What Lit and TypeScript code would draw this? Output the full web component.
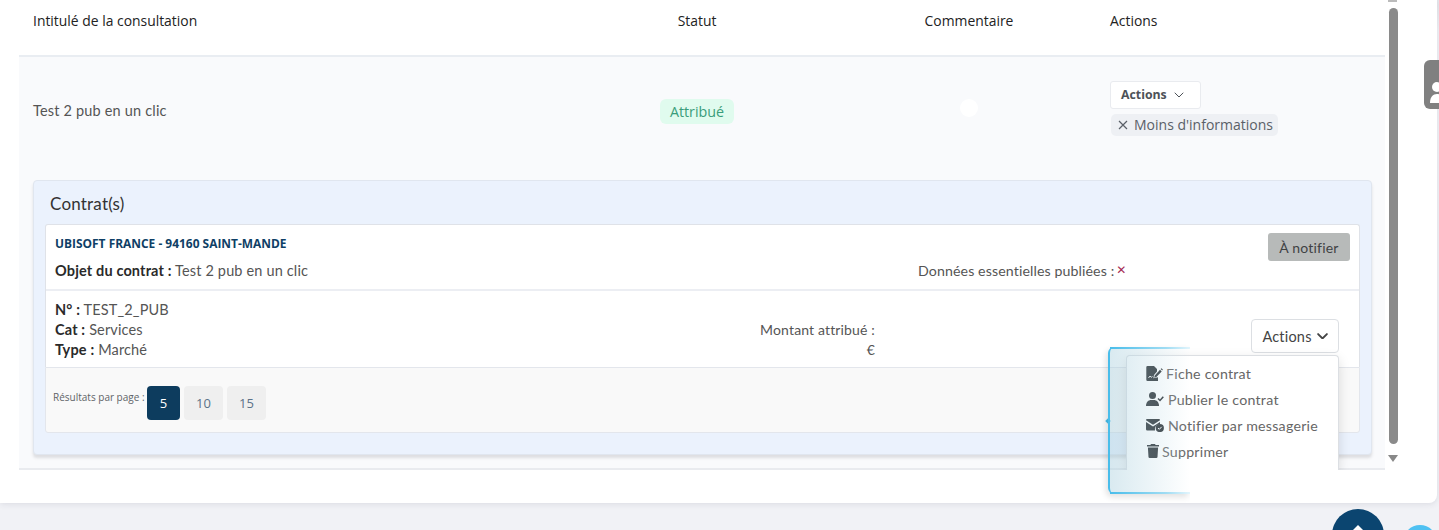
import { LitElement, html, css } from "lit";
import { customElement } from "lit/decorators.js";

const chevron = (w: number, sw: number) => html`<svg class="chev" width=${w} height=${w * 0.6} viewBox="0 0 10 6" fill="none" stroke="currentColor" stroke-width=${sw} stroke-linecap="round" stroke-linejoin="round"><path d="M1 1l4 4 4-4"/></svg>`;

const fileIcon = html`<svg class="ic file" width="17" height="15" viewBox="0 0 17 15" fill="#1f2428"><path d="M1.500 0H8l3 3v2.600L8 9l-.6 3.200 4.600-1V15H1.500A1.200 1.200 0 0 1 .3 13.800V1.200A1.200 1.200 0 0 1 1.500 0z"/><path d="M8.800 9.400l5.200-5.600 1.700 1.600-5.300 5.600-2.300.7z"/><path d="M14.700 3.100l.8-.8 1.300 1.200-.6 1z"/><path d="M2.500 12l1.500-2 1.200 1.300 1.300-.8" fill="none" stroke="#fff" stroke-width=".9"/></svg>`;
const userIcon = html`<svg class="ic user" width="18" height="14" viewBox="0 0 18 14" fill="#1f2428"><circle cx="6.500" cy="3.500" r="3.500"/><path d="M0 14c0-4 2.500-6 5-6h3c2.500 0 5 2 5 6z"/><path d="M12 6.500l2 2 3.300-3.800" fill="none" stroke="#1f2428" stroke-width="1.500"/></svg>`;
const mailIcon = html`<svg class="ic user" width="18" height="13" viewBox="0 0 18 13" fill="#1f2428"><path d="M1.300 0h11.400c.8 0 1.300.5 1.300 1.200L7 5.800 0 1.200C0 .5.500 0 1.300 0z"/><path d="M0 2.900l7 4.500 7-4.500v2.300a5 5 0 0 0-5 6.300H1.300A1.300 1.300 0 0 1 0 10.200z"/><circle cx="13.800" cy="9" r="4.100"/><path d="M12 9l1.300 1.300 2.400-2.500" fill="none" stroke="#fff" stroke-width="1"/></svg>`;
const trashIcon = html`<svg class="ic trash" width="12" height="14" viewBox="0 0 12 14" fill="#1f2428"><path d="M4 0h4l.6 1H12v1.500H0V1h3.400z"/><path d="M.9 3.500h10.200l-.6 9.400a1.200 1.200 0 0 1-1.200 1.100H2.700a1.200 1.200 0 0 1-1.200-1.100z"/></svg>`;

@customElement("app-root")
export class AppRoot extends LitElement {
  static styles = css`
    :host { display: block; position: relative; height: 530px; overflow: hidden; background: linear-gradient(#e5e6eb, #f1f2f6 30px); font-family: "Lato", "Open Sans", sans-serif; color: #555; }
    .card { width: 1437px; height: 503px; background: #fff; border-radius: 0 0 8px 0; box-shadow: 0 1px 6px rgba(60,60,80,.12); display: flex; padding-left: 19px; box-sizing: border-box; }
    .table { width: 1366px; flex: none; }
    .grid { display: grid; grid-template-columns: 537px 282px 262px 285px; }
    .thead { height: 57px; box-sizing: border-box; align-items: center; border-bottom: 2px solid #e9edf2; font-family: "Open Sans", sans-serif; font-size: 13.900px; color: #222; padding-bottom: 14px; }
    .thead .c1 { padding-left: 14px; } .thead .c2, .thead .c3 { text-align: center; } .thead .c4 { padding-left: 10px; }
    .expanded { background: #f9fafc; height: 411px; border-bottom: 2px solid #e9ebef; }
    .main { height: 108px; align-items: center; }
    .name { padding-left: 14px; font-size: 14.500px; letter-spacing: .18px; color: #555; margin-top: -2px; }
    .status { display: flex; justify-content: center; }
    .badge { font-family: "Open Sans", sans-serif; font-size: 14.300px; color: #3a9d7b; background: #e0fbee; border-radius: 6px; padding: 0 10px; height: 25px; line-height: 26px; }
    .comment { display: flex; justify-content: center; transform: translateY(-3px); }
    .dot { width: 18px; height: 18px; border-radius: 50%; background: #fff; }
    .acts { padding-left: 10px; display: flex; flex-direction: column; align-items: flex-start; gap: 5px; margin-top: -6px; }
    .btn1 { width: 91px; height: 28px; box-sizing: border-box; background: #fff; border: 1px solid #e9ebef; border-radius: 3px; font-family: "Open Sans", sans-serif; font-weight: 700; font-size: 12.300px; color: #4d5258; display: flex; align-items: center; padding-left: 10px; gap: 7px; }
    .more { margin-left: 1px; height: 22px; padding: 0 5px 0 7px; border-radius: 5px; background: #eef0f4; font-family: "Open Sans", sans-serif; font-size: 14px; color: #5a6068; display: flex; align-items: center; gap: 6px; line-height: 1; }
    .panel { margin: 15px 13px 0 14px; height: 275px; box-sizing: border-box; background: #ebf2fd; border: 1px solid #e0e6ef; border-radius: 4px; box-shadow: 0 3px 3px rgba(80,80,90,.16); padding: 0 11px; }
    .panel h3 { margin: 0; height: 43px; font-weight: 400; font-size: 17px; letter-spacing: .2px; color: #333; padding-left: 5px; line-height: 45px; }
    .inner { background: #fff; border: 1px solid #dfe2e8; border-bottom: none; border-radius: 3px 3px 0 0; height: 143px; box-sizing: border-box; }
    .head { height: 66px; box-sizing: border-box; border-bottom: 2px solid #eceef3; padding: 8px 9px 0; display: grid; grid-template-columns: 863px 1fr; grid-template-rows: 28px 20px; }
    .company { font-family: "Open Sans", sans-serif; font-weight: 700; font-size: 11.950px; color: #0f3f66; align-self: center; margin-top: -8px; }
    .notify { justify-self: end; width: 82px; height: 28px; background: #b7bab9; color: #3f4244; border-radius: 3px; font-size: 14px; display: flex; align-items: center; justify-content: center; letter-spacing: .2px; }
    .line { font-size: 14.500px; letter-spacing: .15px; color: #555; line-height: 20px; }
    .line b { color: #2a2a2a; font-weight: 700; }
    .ess { font-size: 14.200px; letter-spacing: .1px; color: #555; line-height: 20px; display: flex; align-items: center; gap: 1px; }
    .cross { color: #a52a55; font-size: 12px; margin-top: -2px; margin-left: 1px; font-family: "DejaVu Sans", sans-serif; }
    .body { height: 75px; display: flex; padding: 9px 20px 0 9px; box-sizing: border-box; }
    .left { width: 820px; flex: none; display: flex; justify-content: space-between; }
    .amount { text-align: right; color: #555; font-size: 14px; letter-spacing: .15px; line-height: 20px; padding-top: 20px; }
    .btn2 { margin-left: auto; width: 88px; height: 34px; box-sizing: border-box; margin-top: 19px; background: #fff; border: 1px solid #dcdfe3; border-radius: 4px; color: #444; font-size: 14.500px; letter-spacing: .2px; display: flex; align-items: center; justify-content: center; gap: 5px; }
    .pager { height: 66px; background: #f9f9f9; border: 1px solid #e3e6ec; border-radius: 0 0 3px 3px; box-sizing: border-box; display: flex; align-items: flex-start; padding: 18px 0 0 7px; font-family: "Open Sans", sans-serif; }
    .pager span { width: 94px; flex: none; white-space: nowrap; font-size: 10px; color: #5f6468; margin-top: 4px; margin-right: 0; }
    .pg { height: 34px; width: 39px; border-radius: 4px; background: #efefef; color: #5b7288; font-size: 13px; display: flex; align-items: center; justify-content: center; margin-left: 4px; }
    .pg.on { width: 33px; background: #0d3c5e; color: #fff; margin-left: 0; }
    .scroll { flex: none; width: 16px; position: relative; display: flex; flex-direction: column; align-items: center; height: 468px; background: #fff; }
    .thumb { width: 9px; height: 436px; margin-top: 8px; background: #8a8a8a; border-radius: 5px; }
    .tri { margin-top: 11px; width: 0; height: 0; border-left: 5px solid transparent; border-right: 5px solid transparent; border-top: 7px solid #888; }
    .tri-up { position: absolute; top: 0; left: 3px; width: 9px; height: 2px; background: #bbb; }
    .menu { position: absolute; left: 1126px; top: 355px; width: 213px; height: 115px; box-sizing: border-box; background: #fff; border: 1px solid #dcdfe3; border-bottom: none; border-radius: 4px 4px 0 0; box-shadow: 0 4px 12px rgba(0,0,0,.13); clip-path: inset(-20px -20px 0 -20px); padding: 4px 0 0 19px; font-size: 14.200px; letter-spacing: .25px; color: #666; }
    .item { height: 26px; display: flex; align-items: center; white-space: nowrap; }
    .ic { flex: none; margin-right: 4px; }
    .ic.file { margin-right: 3px; }
    .ic.trash { margin-left: 1px; margin-right: 3px; }
    .glow { position: absolute; left: 1108px; top: 347px; width: 82px; height: 147px; box-sizing: border-box; border-left: 2px solid #49bdea; border-radius: 6px 0 0 6px; background: linear-gradient(90deg, rgba(165,205,220,.42), rgba(200,225,235,.28) 60%, rgba(255,255,255,0)); box-shadow: -2px 3px 6px rgba(0,0,0,.12); clip-path: inset(-10px 0 -10px -10px); }
    .glow::before, .glow::after { content: ""; position: absolute; left: 0; right: 0; height: 2px; background: linear-gradient(90deg, #49bdea, #9fdcf3 70%, #e3f5fc); }
    .glow::before { top: 0; } .glow::after { bottom: 0; }
    .notch { position: absolute; left: 1106px; top: 419px; width: 4px; height: 4px; background: #49bdea; transform: rotate(45deg); }
    .tab { position: absolute; left: 1424px; top: 60px; width: 20px; height: 49px; background: #808080; border-radius: 6px 0 0 6px; overflow: hidden; }
    .tab svg { position: absolute; left: 6px; top: 21px; }
    .fab { position: absolute; left: 1332px; top: 509px; width: 52px; height: 52px; border-radius: 50%; background: #0b4570; }
    .fab svg { position: absolute; left: 17px; top: 16px; }
    .fab2 { position: absolute; left: 1403px; top: 525px; width: 34px; height: 34px; border-radius: 50%; background: #4fc1f2; }
  `;

  render() {
    return html`
      <div class="card">
        <div class="table">
          <div class="grid thead">
            <div class="c1">Intitulé de la consultation</div>
            <div class="c2">Statut</div>
            <div class="c3">Commentaire</div>
            <div class="c4">Actions</div>
          </div>
          <div class="expanded">
            <div class="grid main">
              <div class="name">Test 2 pub en un clic</div>
              <div class="status"><div class="badge">Attribué</div></div>
              <div class="comment"><div class="dot"></div></div>
              <div class="acts">
                <div class="btn1">Actions ${chevron(10, 1)}</div>
                <div class="more"><svg width="10" height="10" viewBox="0 0 10 10" stroke="#5a6068" stroke-width="1.200" fill="none"><path d="M1 1l8 8M9 1l-8 8"/></svg>Moins d'informations</div>
              </div>
            </div>
            <div class="panel">
              <h3>Contrat(s)</h3>
              <div class="inner">
                <div class="head">
                  <div class="company">UBISOFT FRANCE - 94160 SAINT-MANDE</div>
                  <div class="notify">À notifier</div>
                  <div class="line"><b>Objet du contrat :</b> Test 2 pub en un clic</div>
                  <div class="ess">Données essentielles publiées :<span class="cross">✕</span></div>
                </div>
                <div class="body">
                  <div class="left">
                    <div>
                      <div class="line"><b>N° :</b> TEST_2_PUB</div>
                      <div class="line"><b>Cat :</b> Services</div>
                      <div class="line"><b>Type :</b> Marché</div>
                    </div>
                    <div class="amount"><div>Montant attribué :</div><div>€</div></div>
                  </div>
                  <div class="btn2">Actions ${chevron(11, 1.700)}</div>
                </div>
              </div>
              <div class="pager">
                <span>Résultats par page :</span>
                <div class="pg on">5</div>
                <div class="pg">10</div>
                <div class="pg">15</div>
              </div>
            </div>
          </div>
        </div>
        <div class="scroll">
          <div class="tri-up"></div>
          <div class="thumb"></div>
          <div class="tri"></div>
        </div>
      </div>
      <div class="menu">
        <div class="item">${fileIcon}Fiche contrat</div>
        <div class="item">${userIcon}Publier le contrat</div>
        <div class="item">${mailIcon}Notifier par messagerie</div>
        <div class="item">${trashIcon}Supprimer</div>
      </div>
      <div class="notch"></div>
      <div class="glow"></div>
      <div class="tab"><svg width="14" height="24" viewBox="0 0 14 24" fill="#fff"><circle cx="7" cy="6" r="5"/><path d="M0 22c0-6 3-9 7-9s7 3 7 9z"/></svg></div>
      <div class="fab"><svg width="18" height="10" viewBox="0 0 18 10" fill="#fff"><path d="M9 0l9 9-2 1H2L0 9z"/></svg></div>
      <div class="fab2"></div>
    `;
  }
}
